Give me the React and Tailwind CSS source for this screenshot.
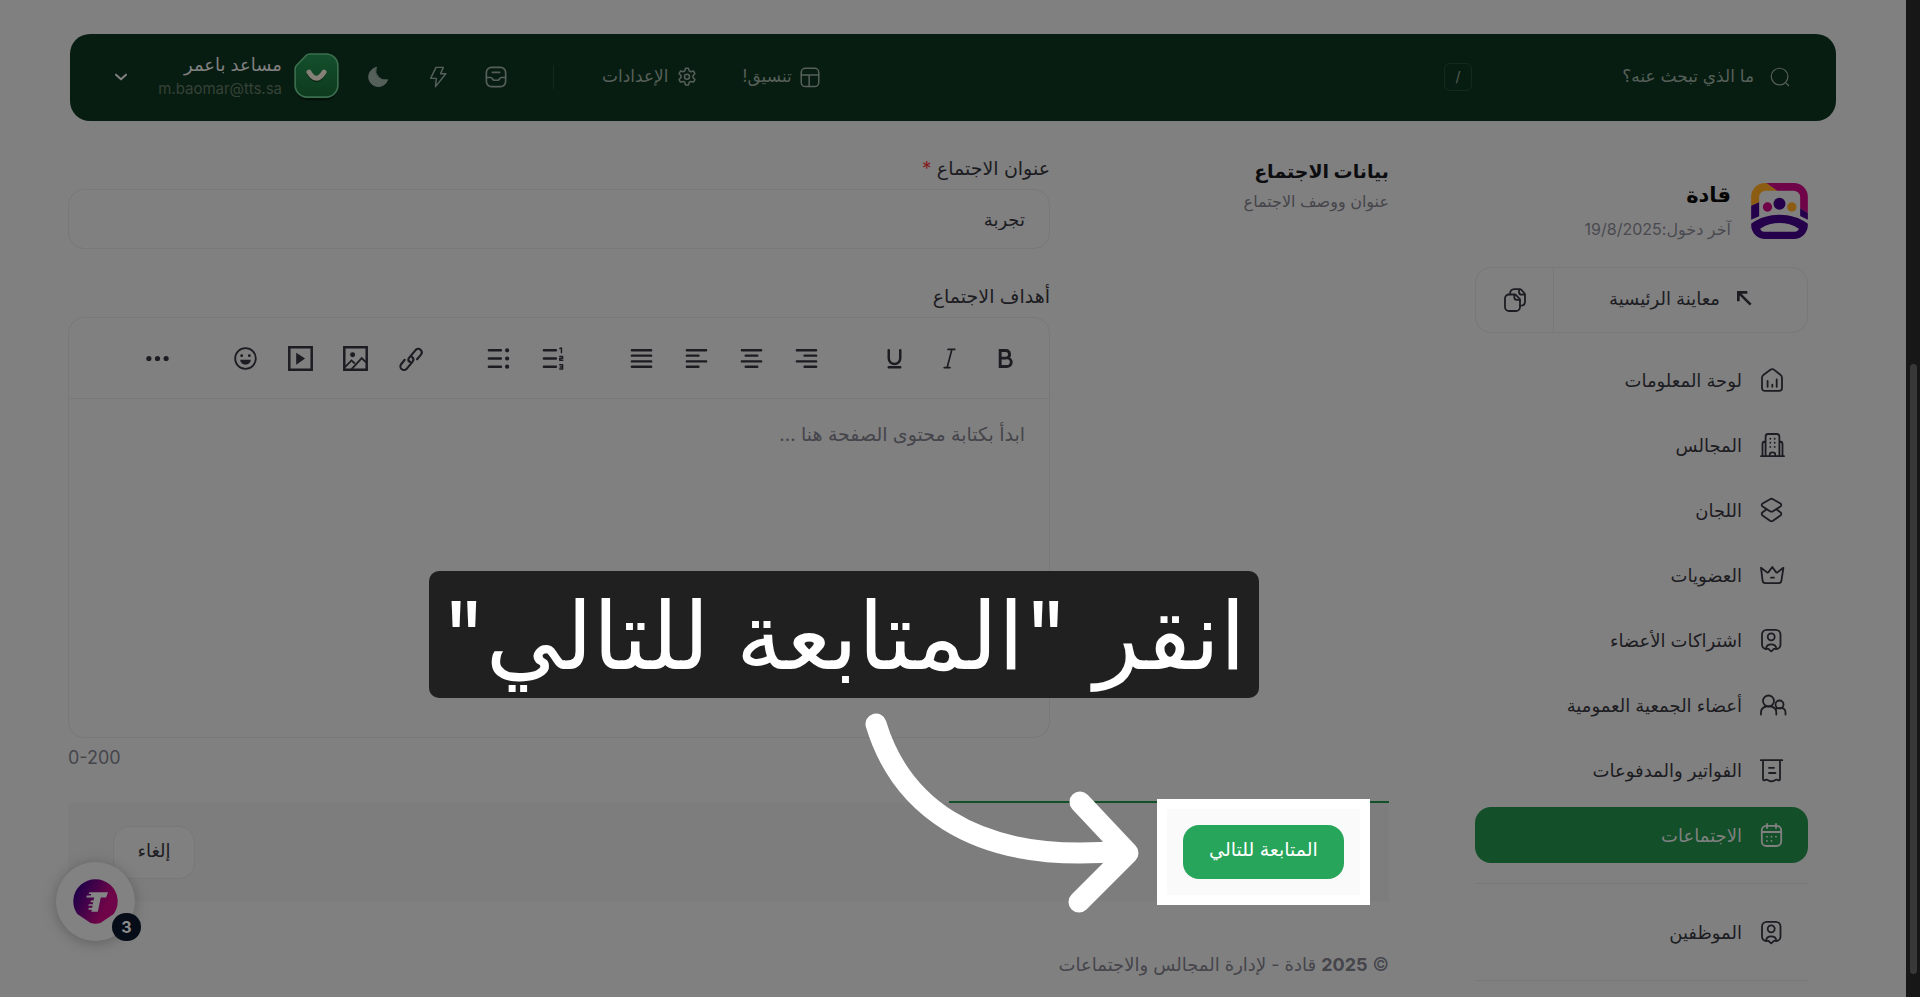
import React from "react";

const Icon = ({ children, className = "w-6 h-6", sw = 1.6, box = "0 0 24 24" }) => (
  <svg viewBox={box} className={`shrink-0 overflow-visible ${className}`} fill="none" stroke="currentColor" strokeWidth={sw} strokeLinecap="round" strokeLinejoin="round" aria-hidden="true">
    {children}
  </svg>
);

const memberIcon = (
  <>
    <path d="M6.5 21A4.8 4.8 0 0 1 2 16.500V6.500A4.800 4.800 0 0 1 6.800 1.800h8.900a4.800 4.800 0 0 1 4.800 4.800v9.900a4.500 4.500 0 0 1-4.400 4.500" />
    <circle cx="11.200" cy="8.800" r="3.500" />
    <path d="M6.300 20.800c-.3-2.700 1.700-4.500 4.900-4.500s5.200 1.800 4.900 4.500c-1.500-.3-2.500.2-3.200 1l-1.700 1.500-1.700-1.500c-.7-.8-1.700-1.300-3.200-1z" />
  </>
);

const MENU = [
  {
    label: "لوحة المعلومات",
    icon: (
      <>
        <path d="M2 9.800c0-1.300.5-2.200 1.600-3L10.800 1.600c1-.7 2-.7 3 0l6.600 5.200c1.100.8 1.600 1.700 1.600 3V20c0 1.700-1.200 2.900-2.900 2.900H4.900C3.200 22.900 2 21.700 2 20z" />
        <path d="M7.600 12.800v6M12.300 16.600v2.200M16.700 11.500v7.300" />
      </>
    ),
  },
  {
    label: "المجالس",
    icon: (
      <>
        <path d="M1 23.200h23M5.600 23V3.500C5.600 1.800 6.500 1 8 1h9c1.500 0 2.400.8 2.400 2.500V23M2.500 23V11c0-1.500 1-2.500 3-2.500M22.500 23V11c0-1.500-1-2.500-3-2.500M9.800 23v-2c0-1 .8-1.700 2.700-1.700s2.700.7 2.700 1.700v2" />
        <path d="M10.300 5.700v.1M14.700 5.700v.1M10.300 9.700v.1M14.700 9.700v.1M10.300 13.800v.1M14.700 13.800v.1" />
      </>
    ),
  },
  {
    label: "اللجان",
    icon: (
      <>
        <path d="M2.600 5.500 10 1.200c1-.6 2-.6 3 0l7.400 4.300c1.200.8 1.200 2.300 0 3.100L13 13.200c-1 .6-2 .6-3 0L2.600 8.600c-1.200-.8-1.200-2.300 0-3.100z" />
        <path d="m6.300 11.500-3.700 2.800c-1.200 1-1.200 2.400 0 3.300L10 22.700c1 .6 2 .6 3 0l7.400-5.100c1.200-.9 1.200-2.300 0-3.300l-3.700-2.800" />
      </>
    ),
  },
  {
    label: "العضويات",
    icon: (
      <>
        <path d="m1 4.800 1.600 12.900c.2 1.600 1.200 2.400 2.800 2.400h13.200c1.600 0 2.600-.8 2.800-2.400L23.400 4.800l-6 4.600c-.6.4-1 .3-1.400-.3L12.300 4 8.500 9.100c-.4.600-.8.700-1.400.3z" />
        <path d="M11 14.600h3" />
      </>
    ),
  },
  { label: "اشتراكات الأعضاء", icon: memberIcon },
  {
    label: "أعضاء الجمعية العمومية",
    icon: (
      <>
        <circle cx="8.500" cy="8" r="5.500" />
        <path d="M1 21.500v-2c0-3 2-5.300 5-6M16.300 21.500v-2c0-3-2-5.300-5-6M5.500 13.300h6.500" />
        <circle cx="19.500" cy="11.500" r="4" />
        <path d="M25.500 21.500v-2c0-2.300-1.500-4-4-4.300M16 15.800l1.500-.6h3.700" />
      </>
    ),
  },
  {
    label: "الفواتير والمدفوعات",
    icon: (
      <>
        <path d="M.8 2.200h21.500M3 2.500v18.600c0 1.200.8 1.500 1.800 1 1.300-.7 2.400-.5 3.300.1 2 1.300 4.600 1.300 6.800 0 1-.6 2-.8 3.300-.1 1 .5 1.800.2 1.800-1V2.500" />
        <path d="M9 9.800h5M9 15h6.500" />
      </>
    ),
  },
  {
    label: "الاجتماعات",
    active: true,
    icon: (
      <>
        <rect x="1.800" y="2.800" width="19.400" height="20.200" rx="4.500" />
        <path d="M1.800 9h19.400M7 1v4M16 1v4" />
        <path d="M7 13.600v.1M11.500 13.600v.1M16 13.600v.1M7 17.800v.1M11.500 17.800v.1" />
      </>
    ),
  },
];

const TOOLS = [
  [
    ["غامق", <path key="a" strokeWidth="3" strokeLinejoin="miter" d="M7.500 3.700v16.700h6.800a4.500 4.500 0 0 0 .5-9 4 4 0 0 0-1.300-7.700zM7.500 11.600h6" />],
    ["مائل", <path key="a" strokeWidth="1.800" d="M10.500 2.500h7M6.500 21.500h6M14.500 2.500l-5 19" />],
    ["تسطير", <path key="a" strokeWidth="2.600" d="M6 3.500v8.200a6 6 0 0 0 12 0V3.500M6 21.200h12" />],
  ],
  [
    ["محاذاة لليمين", <path key="a" strokeWidth="2.600" d="M2 3.500h20M10 9h12M2 15h20M10 20.500h12" />],
    ["توسيط", <path key="a" strokeWidth="2.600" d="M2 3.500h20M6 9h12M2 15h20M6 20.500h12" />],
    ["محاذاة لليسار", <path key="a" strokeWidth="2.600" d="M2 3.500h20M2 9h12M2 15h20M2 20.500h12" />],
    ["ضبط", <path key="a" strokeWidth="2.600" d="M2 3.500h20M2 9h20M2 15h20M2 20.500h20" />],
  ],
  [
    [
      "قائمة مرقمة",
      <g key="a">
        <path strokeWidth="2.600" d="M2 3.500h12.500M2 12h12.500M2 20.500h12.500" />
        <path strokeWidth="1.500" d="M18.700 1.500 20.300 1v5M18.500 10h3v1.800l-3 .2v1.800h3.200M18.500 18.600h3v4.400h-3M19 20.800h2.300" />
      </g>,
    ],
    [
      "قائمة نقطية",
      <g key="a">
        <path strokeWidth="2.600" d="M2 3.500h12.500M2 12h12.500M2 20.500h12.500" />
        <path strokeWidth="4.400" d="M21 3.500v.01M21 12v.01M21 20.500v.01" />
      </g>,
    ],
  ],
  [
    [
      "رابط",
      <path key="a" strokeWidth="2.200" d="m10 12.500 .3-.9 7.200-8.600a3.700 3.700 0 0 1 5.500 4.900l-4.200 4.900M13.700 10.600c1.800 1.400 1.500 3.300.5 4.700l-6 7.200a3.700 3.700 0 0 1-6-4.500l3.800-4.700M10 12c-.6 1.600.2 3 1.500 3.500" />,
    ],
    [
      "صورة",
      <g key="a" strokeLinecap="butt" strokeLinejoin="miter">
        <path strokeWidth="2.600" d="M.300.300h23.400v23.400H.300z" />
        <path strokeWidth="1.900" d="m1 21 6.800-7 3.500 3.200M8 23 18.500 11.500 23 16" />
        <circle cx="9" cy="8" r="2.600" fill="currentColor" stroke="none" />
      </g>,
    ],
    [
      "فيديو",
      <g key="a">
        <path strokeWidth="2.600" strokeLinejoin="miter" d="M.300.300h23.400v23.400H.300z" />
        <path fill="currentColor" stroke="none" d="M7.500 6v12.500L16.800 12z" />
      </g>,
    ],
    [
      "رموز",
      <g key="a">
        <circle cx="12" cy="12" r="10.800" strokeWidth="1.900" />
        <path strokeWidth="3" d="M8 9v.01M16 9v.01" />
        <path fill="currentColor" stroke="none" d="M6.500 13.200h11c0 3-2.500 5-5.500 5s-5.500-2-5.500-5z" />
      </g>,
    ],
  ],
  [["المزيد", <path key="a" strokeWidth="5.400" d="M3 12v.01M12 12v.01M21 12v.01" />]],
];

function QadaLogo() {
  return (
    <svg viewBox="0 0 170 168" className="w-[57px] h-14 shrink-0" aria-hidden="true">
      <path fill="#8c5c12" d="M0 68V42A42 42 0 0 1 42 0h4l32 23H44a20 20 0 0 0-20 20v15z" />
      <path fill="#6f0448" d="M46 0h82a42 42 0 0 1 42 42v48l-23-14V43a20 20 0 0 0-20-20H78z" />
      <path fill="#24014a" d="M0 68l24-10v42L0 110zM147 76l23 14v20l-23-11z" />
      <path fill="#24014a" fillRule="evenodd" d="M0 122C25 103 55 95 85 95s60 8 85 27v4a42 42 0 0 1-42 42H42a42 42 0 0 1-42-42zM27 137c2 6 6 9 12 9h92c6 0 10-3 12-9-18-12-38-17-58-17s-40 5-58 17z" />
      <circle cx="49" cy="72" r="14" fill="#6f0448" />
      <circle cx="85" cy="62" r="18" fill="#24014a" />
      <circle cx="122" cy="72" r="14" fill="#8c5c12" />
    </svg>
  );
}

function Avatar() {
  return (
    <svg viewBox="0 0 136 146" className="w-[45px] h-12 shrink-0" aria-hidden="true">
      <defs>
        <linearGradient id="av" x1="0" y1="0" x2="0" y2="1">
          <stop offset="0" stopColor="#14502c" />
          <stop offset="1" stopColor="#0d3a1d" />
        </linearGradient>
      </defs>
      <path fill="#04110a" d="M4 60h128v46a38 38 0 0 1-38 38H42a38 38 0 0 1-38-38z" />
      <path fill="url(#av)" stroke="#3d6d4f" strokeWidth="5" d="M3 48q0-6 4-10L37 7q4-4 10-4h50a36 36 0 0 1 36 36v59a36 36 0 0 1-36 36H39A36 36 0 0 1 3 98z" />
      <path fill="none" stroke="#06200f" strokeWidth="12" strokeLinecap="round" d="M45 63q22 38 46 0" />
      <path fill="none" stroke="#858078" strokeWidth="15" strokeLinecap="round" d="M45 58q22 38 46 0" />
    </svg>
  );
}

function Header() {
  return (
    <header className="mx-[70px] mt-[34px] h-[87px] rounded-[20px] bg-[#081d11] flex items-center justify-between pr-[46px] pb-[2px] pl-[43px] text-[#56605a]">
      <div className="flex items-center w-[346px]">
        <Icon className="w-5 h-5" sw={1.4}>
          <circle cx="11.500" cy="11.500" r="10" />
          <path d="m19.500 19.500 3 3" />
        </Icon>
        <input type="text" aria-label="بحث" placeholder="ما الذي تبحث عنه؟" className="mr-4 flex-1 min-w-0 bg-transparent text-[17px] outline-none placeholder:text-[#56605a]" />
        <kbd dir="ltr" className="w-7 h-7 shrink-0 rounded-md border border-[#17291e] text-center font-['Inter',sans-serif] text-[14px] leading-[26px]">/</kbd>
      </div>
      <div className="flex items-center">
        <button type="button" className="flex items-center gap-2 text-[17px]">
          <Icon className="w-5 h-5" sw={1.8}>
            <rect x="1.500" y="1.500" width="21" height="22" rx="5" />
            <path d="M1.500 9.500h21M11 9.500v14" />
          </Icon>
          تنسيق!
        </button>
        <button type="button" className="mr-[46px] flex items-center gap-2 text-[17px]">
          <Icon className="w-5 h-5" sw={1.8}>
            <path d="M10.300 1.500h3.400l1 3.200 1.800 1 3.300-.8 1.700 3-2.300 2.500v2.200l2.300 2.500-1.700 3-3.300-.8-1.800 1-1 3.200h-3.400l-1-3.200-1.800-1-3.300.8-1.700-3 2.300-2.500v-2.200L2.500 7.900l1.700-3 3.300.8 1.800-1z" />
            <circle cx="12" cy="11.700" r="3" />
          </Icon>
          الإعدادات
        </button>
        <span className="mr-12 w-px h-6 bg-[#17291e]" />
        <button type="button" aria-label="الوارد" className="mr-[46px]">
          <Icon className="w-[22px] h-[22px]" sw={1.8}>
            <rect x="1.500" y="1.500" width="21" height="21" rx="5.500" />
            <path d="M1.500 12.500h5c1.500 0 1.600 3 3.500 3h4c1.900 0 2-3 3.500-3h5M8 7h8" />
          </Icon>
        </button>
        <button type="button" aria-label="إجراءات سريعة" className="mr-9">
          <Icon className="w-[22px] h-[22px]" sw={1.6}>
            <path d="M9.800 1.500h8l-3 7h5.700L9.300 22.500l.8-9H4z" />
          </Icon>
        </button>
        <button type="button" aria-label="الوضع الليلي" className="mr-[38px]">
          <Icon className="w-[22px] h-[22px]" sw={1}>
            <path fill="currentColor" d="M10 1.500A10.600 10.600 0 1 0 22.500 15 10.500 10.500 0 0 1 10 1.500z" />
          </Icon>
        </button>
        <button type="button" className="mr-7 flex items-center text-right">
          <Avatar />
          <span className="mr-3 w-[129px] flex flex-col text-[15px] leading-6">
            <span className="text-[18px] text-[#808080]">مساعد باعمر</span>
            <span dir="ltr" className="text-right text-[#364238]">m.baomar@tts.sa</span>
          </span>
          <Icon className="mr-6 w-4 h-4 text-[#808080]" sw={3}>
            <path d="m4.500 8.500 7.500 7 7.500-7" />
          </Icon>
        </button>
      </div>
    </header>
  );
}

function MenuItem({ label, icon, active }) {
  return (
    <li>
      <a href="#" className={`h-14 rounded-2xl flex items-center gap-[18px] pr-[22px] text-[18px] ${active ? "bg-[#13502a] text-[#808080]" : "text-[#1c1c22]"}`}>
        <Icon className="w-[26px] h-[26px]" box="0 0 26 24" sw={1.8}>{icon}</Icon>
        {label}
      </a>
    </li>
  );
}

function Sidebar() {
  return (
    <aside className="w-[333px] shrink-0 pt-[60px]">
      <div className="flex items-center gap-5">
        <QadaLogo />
        <div>
          <p className="text-[21px] leading-7 font-bold text-[#060606]">قادة</p>
          <p className="mt-2 text-[16px] leading-6 text-[#4a4a50]">آخر دخول:19/8/2025</p>
        </div>
      </div>
      <div className="mt-[26px] h-[66px] rounded-2xl border border-[#787878] flex text-[#1c1c22]">
        <a href="#" className="flex-1 flex items-center justify-center gap-4 pb-1 text-[18px]">
          <Icon className="w-4 h-4" sw={4}>
            <path strokeLinejoin="miter" strokeLinecap="butt" d="M3.500 17V3.500H17M3.500 3.500 22 22" />
          </Icon>
          معاينة الرئيسية
        </a>
        <button type="button" aria-label="نسخ" className="w-[78px] border-r border-[#787878] flex items-center justify-center">
          <Icon className="w-6 h-6" sw={1.8}>
            <path d="M2 10.500a4 4 0 0 1 4-4h5.300c.8 0 1.500.3 2 .8l3 3.200c.5.500.7 1.100.7 1.800v6.700a4 4 0 0 1-4 4H6a4 4 0 0 1-4-4z" />
            <path d="M11.300 6.700v2.500c0 1.800.9 2.700 2.700 2.700h2.800M7 6.300C7 3 8.500 1.200 11.500 1.200h5c.8 0 1.500.3 2 .8l2.800 3.200c.5.500.7 1.100.7 1.800v6.700c0 2.500-1.700 4-4.500 4M16 1.400v2.500c0 1.800.9 2.700 2.700 2.700h3" />
          </Icon>
        </button>
      </div>
      <nav aria-label="القائمة" className="mt-[19px]">
        <ul className="flex flex-col gap-[9px]">
          {MENU.map((m) => <MenuItem key={m.label} {...m} />)}
        </ul>
        <hr className="mt-5 border-[#777777]" />
        <ul className="my-5">
          <MenuItem label="الموظفين" icon={memberIcon} />
        </ul>
        <hr className="border-[#777777]" />
      </nav>
    </aside>
  );
}

function Editor() {
  return (
    <div className="mt-2 rounded-2xl border border-[#787878] overflow-hidden">
      <div role="toolbar" aria-label="تنسيق النص" className="h-[81px] border-b border-[#787878] flex items-center gap-[33px] pr-[17px] text-[#1c1c22]">
        {TOOLS.map((group, i) => (
          <div key={i} className="flex">
            {group.map(([name, art]) => (
              <button key={name} type="button" aria-label={name} className="w-[55px] h-10 flex items-center justify-center">
                <Icon className="w-[23px] h-[23px]">{art}</Icon>
              </button>
            ))}
          </div>
        ))}
      </div>
      <textarea id="goals" placeholder="ابدأ بكتابة محتوى الصفحة هنا ..." className="block w-full h-[338px] resize-none bg-transparent px-6 py-6 text-[19px] leading-6 outline-none placeholder:text-[#45454b]" />
    </div>
  );
}

function Spotlight() {
  return (
    <div className="relative flex">
      <div className="border-[10px] border-white bg-[#fafafa] p-4">
        <button type="submit" className="w-[161px] h-[54px] rounded-2xl bg-[#27a55a] pb-1 text-white text-[19px]">المتابعة للتالي</button>
      </div>
      <svg viewBox="860 705 290 215" className="absolute right-[220px] -top-[94px] w-[290px] h-[215px] max-w-none" fill="none" stroke="#fff" strokeWidth="21" strokeLinecap="round" strokeLinejoin="round" aria-hidden="true">
        <path d="M876 724C898 797 965 866 1122 851" />
        <path d="M1080 802l48 51-49 49" />
      </svg>
    </div>
  );
}

function ChatLauncher() {
  return (
    <button type="button" aria-label="المحادثة" className="absolute left-14 bottom-14 w-[79px] h-[79px] rounded-full bg-[#828282] shadow-[0_2px_14px_rgba(0,0,0,0.25)] flex items-center justify-center">
      <svg viewBox="0 0 136 136" className="w-[45px] h-[45px]" aria-hidden="true">
        <defs>
          <linearGradient id="tg" x1="0" y1="0.200" x2="1" y2="0.700">
            <stop offset="0.100" stopColor="#24014a" />
            <stop offset="0.750" stopColor="#6f0448" />
          </linearGradient>
        </defs>
        <path fill="url(#tg)" d="M13 106A67 67 0 1 1 123 106L84 132q-16 7-32 0z" />
        <path fill="#858585" d="M50 40h56l-6 16H84l-9 43H55l2-6H46l2-6h10l1-6H46l2-5h12l1-6h-8l1-5h8l2-9H40l2-6h12l1-5h-8z" />
      </svg>
      <span className="absolute -right-[6px] bottom-0 w-[29px] h-7 rounded-full bg-[#070d18] text-[#8c8c8c] text-[16px] font-bold flex items-center justify-center">3</span>
    </button>
  );
}

export default function App() {
  return (
    <div dir="rtl" className="relative min-h-screen flex overflow-hidden bg-[#808080] font-['Inter','DejaVu_Sans',sans-serif]">
      <div className="w-[14px] shrink-0 bg-[#171717] flex justify-center pt-[364px] pb-[23px]">
        <div className="w-[7px] rounded-full bg-[#383838]" />
      </div>
      <div className="flex-1 min-w-0">
        <Header />
        <div className="flex gap-[86px] pr-[98px] pl-[68px]">
          <Sidebar />
          <main className="flex-1 min-w-0">
            <form onSubmit={(e) => e.preventDefault()}>
              <div className="flex pt-9">
                <section className="w-[339px] shrink-0">
                  <h1 className="text-[19px] leading-[30px] font-bold text-[#0d0d10]">بيانات الاجتماع</h1>
                  <p className="text-[16px] leading-[28px] text-[#45454b]">عنوان ووصف الاجتماع</p>
                </section>
                <div className="flex-1 min-w-0">
                  <label htmlFor="title" className="block text-[19px] leading-6 text-[#1c1c22]">
                    عنوان الاجتماع <span className="text-[#861d1d]">*</span>
                  </label>
                  <input id="title" type="text" defaultValue="تجربة" className="mt-2 block w-full h-[60px] rounded-2xl border border-[#787878] bg-transparent px-6 text-[18px] text-[#1c1c22] outline-none" />
                  <label htmlFor="goals" className="mt-9 block text-[19px] leading-6 text-[#1c1c22]">أهداف الاجتماع</label>
                  <Editor />
                  <p dir="ltr" className="mt-2 text-[18px] leading-6 text-[#45454b]">0-200</p>
                </div>
              </div>
              <div className="mt-[31px] h-[2px] w-1/3 bg-[#13502a]" />
              <div className="h-[98px] bg-[#7d7d7d] flex items-center justify-between pr-[19px] pl-[45px]">
                <Spotlight />
                <button type="button" className="w-[82px] h-[53px] rounded-2xl border border-[#787878] bg-[#808080] pb-1 text-[18px] text-[#1c1c22]">إلغاء</button>
              </div>
            </form>
            <footer className="pt-[52px] text-[18px] leading-6 text-[#45454b]">
              © <b>2025</b> قادة - لإدارة المجالس والاجتماعات
            </footer>
          </main>
        </div>
      </div>
      <div className="absolute left-[429px] top-[571px] w-[830px] h-[127px] rounded-[10px] bg-[#202020] flex items-center justify-center text-white text-[94px] leading-none whitespace-nowrap">
        انقر "المتابعة للتالي"
      </div>
      <ChatLauncher />
    </div>
  );
}
